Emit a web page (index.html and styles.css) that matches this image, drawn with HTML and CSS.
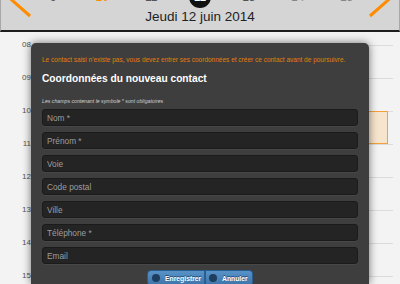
FILE: index.html
```html
<!DOCTYPE html>
<html lang="fr">
  <head>
    <meta charset="UTF-8" />
    <meta name="viewport" content="width=device-width, initial-scale=1.0" />
    <title>Agenda - Nouveau contact</title>
    <link rel="stylesheet" href="styles.css">
  </head>
  <body>
    <!-- Day header -->
    <div class="day-header">
      <svg class="nav-arrow" width="28" height="30" viewBox="0 0 28 30">
        <line x1="4" y1="-6" x2="29" y2="16" stroke="#ff8c00" stroke-width="3" />
      </svg>
      <div class="day-center">
        <div class="week-row">
          <span class="wd">9</span>
          <span class="wd wd-orange">10</span>
          <span class="wd">11</span>
          <span class="wd"><b class="today">12</b></span>
          <span class="wd">13</span>
          <span class="wd wd-light">14</span>
          <span class="wd wd-light">15</span>
        </div>
        <div class="day-title">Jeudi 12 juin 2014</div>
      </div>
      <svg class="nav-arrow" width="28" height="30" viewBox="0 0 28 30">
        <line x1="24" y1="-6" x2="-1" y2="16" stroke="#ff8c00" stroke-width="3" />
      </svg>
    </div>

    <!-- Hours grid -->
    <div class="hours">
      <div class="hour-row"><span class="hour-label">08</span><div class="slot"></div></div>
      <div class="hour-row"><span class="hour-label">09</span><div class="slot"></div></div>
      <div class="hour-row"><span class="hour-label">10</span><div class="slot"><div class="event"></div></div></div>
      <div class="hour-row"><span class="hour-label">11</span><div class="slot"></div></div>
      <div class="hour-row"><span class="hour-label">12</span><div class="slot"></div></div>
      <div class="hour-row"><span class="hour-label">13</span><div class="slot"></div></div>
      <div class="hour-row"><span class="hour-label">14</span><div class="slot"></div></div>
      <div class="hour-row"><span class="hour-label">15</span><div class="slot"></div></div>
    </div>

    <!-- New contact dialog -->
    <div class="dialog">
      <p class="warning">Le contact saisi n'existe pas, vous devez entrer ses coordonnées et créer ce contact avant de poursuivre.</p>
      <h3 class="dialog-title">Coordonnées du nouveau contact</h3>
      <p class="note">Les champs contenant le symbole * sont obligatoires</p>

      <form class="contact-form">
        <input type="text" class="field" placeholder="Nom *" />
        <input type="text" class="field" placeholder="Prénom *" />
        <input type="text" class="field" placeholder="Voie" />
        <input type="text" class="field" placeholder="Code postal" />
        <input type="text" class="field" placeholder="Ville" />
        <input type="text" class="field" placeholder="Téléphone *" />
        <input type="text" class="field" placeholder="Email" />

        <div class="btn-group">
          <button type="button" class="btn btn-first"><span class="btn-icon"></span>Enregistrer</button>
          <button type="button" class="btn btn-last"><span class="btn-icon"></span>Annuler</button>
        </div>
      </form>
    </div>
  </body>
</html>
```

FILE: styles.css
```css
body {
  font-family: "Liberation Sans", Arial, sans-serif;
  margin: 0;
  padding: 0;
  width: 400px;
  height: 284px;
  overflow: hidden;
  position: relative;
  background-color: #f3f3f3;
}

/* Header */
.day-header {
  display: grid;
  grid-template-columns: 28px 1fr 28px;
  height: 30px;
  background-color: #d5d5d5;
  border-left: 1px solid #a8a8a8;
  border-right: 1px solid #a8a8a8;
  border-bottom: 2px solid #1e1e1e;
  overflow: hidden;
}

.nav-arrow {
  overflow: visible;
}

.day-center {
  display: flex;
  flex-direction: column;
}

.week-row {
  display: flex;
  height: 22px;
  margin-top: -14px;
}

.wd {
  flex: 1;
  display: flex;
  justify-content: center;
  align-items: center;
  font-size: 12px;
  line-height: 22px;
  color: #555;
}

.wd-orange {
  color: #ff8c00;
}

.wd-light {
  color: #888;
}

.today {
  display: flex;
  justify-content: center;
  align-items: center;
  width: 22px;
  height: 22px;
  border-radius: 50%;
  background-color: #111;
  color: #fff;
  font-size: 11px;
}

.day-title {
  margin-top: 1px;
  text-align: center;
  font-size: 13.5px;
  line-height: 16px;
  color: #222;
}

/* Hours */
.hours {
  padding-top: 13px;
}

.hour-row {
  display: flex;
  height: 33px;
}

.hour-label {
  width: 33px;
  margin-top: -4px;
  padding-right: 2px;
  box-sizing: border-box;
  text-align: right;
  font-size: 8px;
  line-height: 8px;
  color: #555;
}

.slot {
  flex: 1;
  margin-right: 7px;
  border-top: 1px solid #dcdcdc;
  display: flex;
  justify-content: flex-end;
}

.event {
  width: 300px;
  height: 33px;
  margin-top: -1px;
  margin-right: 5px;
  box-sizing: border-box;
  border: 1px solid #f5a03a;
  background-color: #f7e4cd;
}

/* Dialog */
.dialog {
  position: absolute;
  left: 31px;
  top: 43px;
  width: 338px;
  height: 241px;
  box-sizing: border-box;
  padding: 13px 11px 0;
  background-color: #3e3e3e;
  border-radius: 5px 5px 0 0;
  box-shadow: 0 0 8px rgba(0, 0, 0, 0.55);
}

.warning {
  margin: 0;
  font-size: 6.5px;
  line-height: 8px;
  white-space: nowrap;
  color: #e27e0a;
}

.dialog-title {
  margin: 9px 0 0;
  font-size: 10.2px;
  line-height: 12px;
  font-weight: bold;
  color: #fff;
}

.note {
  margin: 13px 0 0;
  font-size: 5.2px;
  line-height: 6px;
  font-style: italic;
  color: #cfcfcf;
}

.contact-form {
  display: flex;
  flex-direction: column;
  gap: 6px;
  margin-top: 5px;
}

.field {
  height: 17px;
  margin: 0;
  padding: 0 4px;
  box-sizing: border-box;
  font-family: "Liberation Sans", Arial, sans-serif;
  font-size: 8.3px;
  color: #eee;
  background-color: #242424;
  border: 1px solid #1b1b1b;
  border-radius: 3px;
  box-shadow: 0 1px 0 #474747;
  outline: none;
}

.field::placeholder {
  color: #9e9e9e;
}

.btn-group {
  display: flex;
  justify-content: center;
}

.btn {
  display: flex;
  align-items: center;
  gap: 5px;
  height: 16px;
  margin: 0;
  padding: 0 6px 0 4px;
  font-family: "Liberation Sans", Arial, sans-serif;
  font-size: 6.8px;
  font-weight: bold;
  color: #fff;
  text-shadow: 0 -1px 0 #1f4a72;
  background: linear-gradient(#5893c8, #3d74aa);
  border: 1px solid #2a5d8f;
  cursor: pointer;
}

.btn-first {
  width: 58px;
  border-radius: 4px 0 0 4px;
}

.btn-last {
  width: 48px;
  border-left: none;
  border-radius: 0 4px 4px 0;
  box-shadow: inset 1px 0 0 #2a5d8f;
}

.btn-icon {
  width: 8px;
  height: 8px;
  border-radius: 50%;
  background-color: #1f3d5e;
  flex-shrink: 0;
}
```
